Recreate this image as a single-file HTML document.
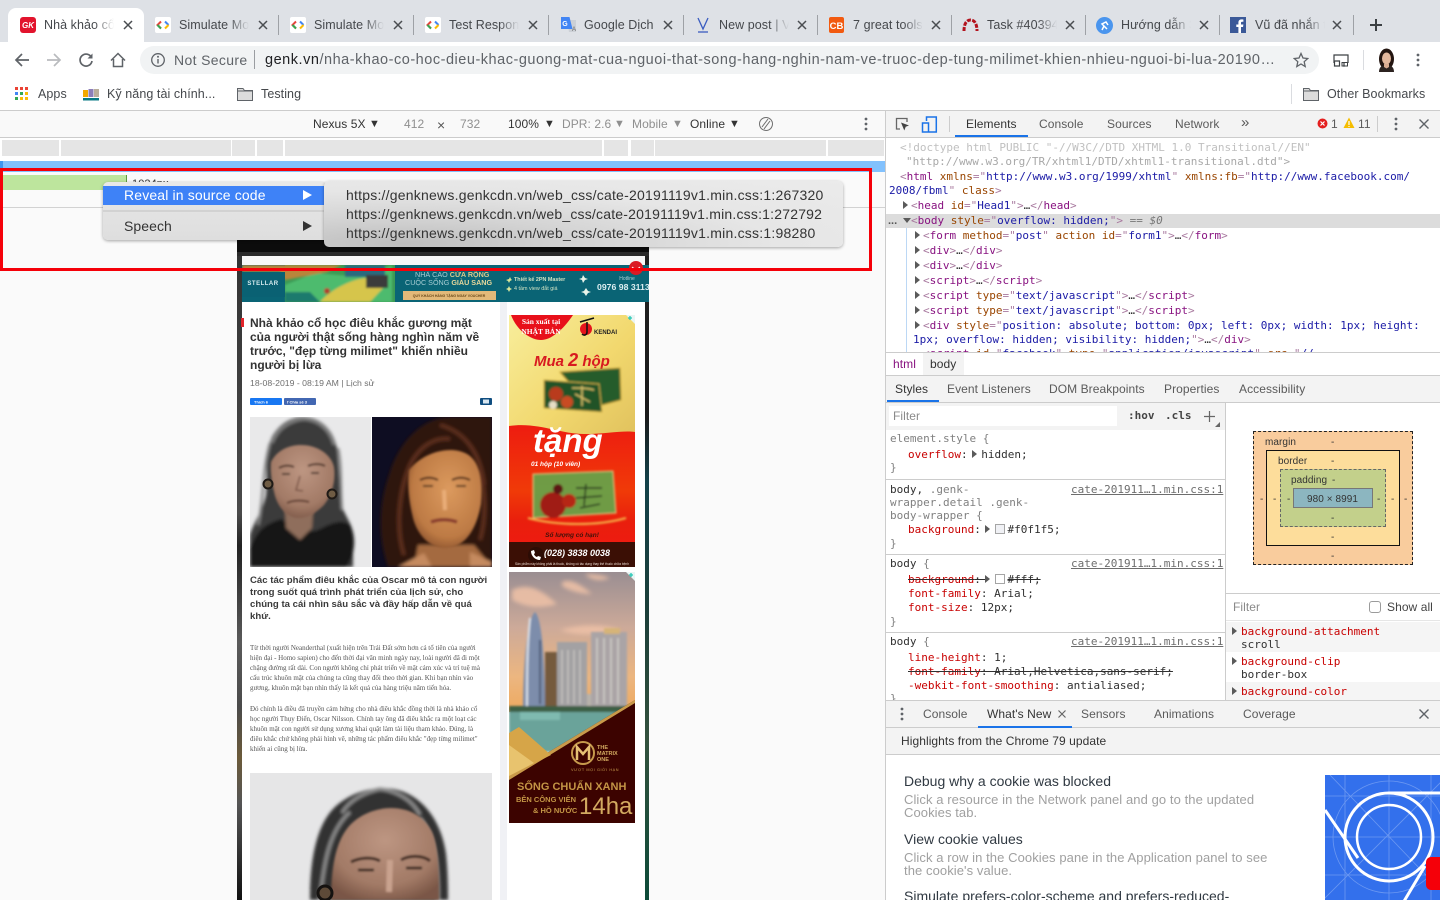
<!DOCTYPE html>
<html><head><meta charset="utf-8"><title>DevTools</title>
<style>
html,body{margin:0;padding:0;width:1440px;height:900px;overflow:hidden;background:#fafafa;font:12px "Liberation Sans","Noto Sans CJK SC",sans-serif;color:#333}
.a{position:absolute;display:block}
.t{position:absolute;white-space:nowrap;line-height:16px;letter-spacing:.07px}
.f{mask-image:linear-gradient(to right,#000 72%,transparent 100%);-webkit-mask-image:linear-gradient(to right,#000 72%,transparent 100%);width:70px;overflow:hidden;top:17px;font-size:12.5px;color:#45484c}
.m{position:absolute;white-space:pre;margin-top:1px;font:11px/14px "DejaVu Sans Mono","Liberation Mono",monospace;color:#303030}
.p{color:#881280}.n{color:#994500}.v{color:#1a1aa6}.g{color:#a8799f}.d{color:#c0c0c0}
.r{color:#c80000}.s{text-decoration:line-through}.l{color:#6d6d6d;text-decoration:underline}
.y{color:#808080}
.tri{position:absolute;width:0;height:0;border-left:5px solid #5a5a5a;border-top:4px solid transparent;border-bottom:4px solid transparent}
.it{display:inline-block;width:0;height:0;border-left:5px solid #5a5a5a;border-top:4px solid transparent;border-bottom:4px solid transparent;margin-left:-2px;margin-right:5px}
.sw{display:inline-block;width:8px;height:8px;border:1px solid #a5a5a5;vertical-align:-1px;margin-right:2px}
.dev{color:#333;font-size:12px}.gr{color:#8f8f8f}
.seg{position:absolute;top:140px;height:16px;background:#e5e5e5}
.ln{position:absolute;background:#ccc}
.art{position:absolute;white-space:nowrap;color:#3a3a3a}
.art2{position:absolute;white-space:nowrap;font:7px/10px "Liberation Serif",serif;color:#555;filter:blur(.3px)}
.cap{position:absolute;white-space:nowrap;font:bold 9.6px/12px "Liberation Sans",sans-serif;color:#3a3a3a}
.ttl{position:absolute;white-space:nowrap;font:bold 12px/14px "Liberation Sans",sans-serif;color:#333}
.gt{position:absolute;white-space:nowrap;font-size:13px;line-height:13px;color:#a0a0a0;letter-spacing:.08px}
.hd{position:absolute;white-space:nowrap;font-size:14px;line-height:16px;color:#303942}
</style></head>
<body>
<svg width="0" height="0" style="position:absolute">
<symbol id="x" viewBox="0 0 10 10"><path d="M1 1L9 9M9 1L1 9" stroke="#4a4d51" stroke-width="1.5" fill="none"/></symbol>
<symbol id="sim" viewBox="0 0 16 16"><rect width="16" height="16" rx="2" fill="#fff"/><path d="M6 4.5L2.500 8 6 11.5" fill="none" stroke="#e8453c" stroke-width="2"/><path d="M2.500 8L6 11.5" fill="none" stroke="#34a853" stroke-width="2"/><path d="M10 4.5L13.5 8" fill="none" stroke="#4285f4" stroke-width="2"/><path d="M13.5 8L10 11.5" fill="none" stroke="#fbbc05" stroke-width="2"/></symbol>
<symbol id="fold" viewBox="0 0 16 14"><path d="M.5 1.500h5.500l1.500 2h8v10H.5z" fill="#dcdcdc" stroke="#5f6368"/><path d="M.5 4h15" stroke="#5f6368"/></symbol>
<symbol id="keb" viewBox="0 0 4 14"><circle cx="2" cy="2" r="1.4" fill="#5f6368"/><circle cx="2" cy="7" r="1.4" fill="#5f6368"/><circle cx="2" cy="12" r="1.4" fill="#5f6368"/></symbol>
<filter id="b1"><feGaussianBlur stdDeviation="1"/></filter>
<filter id="b15"><feGaussianBlur stdDeviation="1.6"/></filter>
<filter id="b2"><feGaussianBlur stdDeviation="2.2"/></filter>
</svg>

<!-- Tab strip -->
<div class="a" style="left:0;top:0;width:1440px;height:42px;background:#dee1e6"></div>
<div class="a" style="left:8px;top:8px;width:136px;height:34px;background:#fff;border-radius:8px 8px 0 0"></div>
<div class="a" style="left:0;top:42px;width:1440px;height:68px;background:#fff"></div>
<div class="ln" style="left:278px;top:15px;width:1px;height:20px;background:#9ea1a6"></div>
<div class="ln" style="left:413px;top:15px;width:1px;height:20px;background:#9ea1a6"></div>
<div class="ln" style="left:548px;top:15px;width:1px;height:20px;background:#9ea1a6"></div>
<div class="ln" style="left:683px;top:15px;width:1px;height:20px;background:#9ea1a6"></div>
<div class="ln" style="left:817px;top:15px;width:1px;height:20px;background:#9ea1a6"></div>
<div class="ln" style="left:951px;top:15px;width:1px;height:20px;background:#9ea1a6"></div>
<div class="ln" style="left:1085px;top:15px;width:1px;height:20px;background:#9ea1a6"></div>
<div class="ln" style="left:1219px;top:15px;width:1px;height:20px;background:#9ea1a6"></div>
<div class="ln" style="left:1353px;top:15px;width:1px;height:20px;background:#9ea1a6"></div>

<!-- favicons -->
<svg class="a" style="left:20px;top:17px" width="16" height="16" viewBox="0 0 16 16"><rect width="16" height="16" rx="3" fill="#e2142d"/><text x="8" y="11" font-family="Liberation Sans" font-weight="bold" font-style="italic" font-size="8" fill="#fff" text-anchor="middle">GK</text></svg>
<svg class="a" style="left:155px;top:17px" width="16" height="16"><use href="#sim"/></svg>
<svg class="a" style="left:290px;top:17px" width="16" height="16"><use href="#sim"/></svg>
<svg class="a" style="left:425px;top:17px" width="16" height="16"><use href="#sim"/></svg>
<svg class="a" style="left:560px;top:16px" width="17" height="18" viewBox="0 0 17 18"><path d="M7 4h9v12H9z" fill="#ccd0d6"/><path d="M1 1h8.500l3 12H1z" fill="#4285f4"/><text x="5" y="10" font-family="Liberation Sans" font-weight="bold" font-size="7" fill="#fff" text-anchor="middle">G</text><text x="12" y="15" font-size="6" fill="#666" font-family="Liberation Sans">A</text></svg>
<svg class="a" style="left:696px;top:17px" width="14" height="16" viewBox="0 0 14 16"><path d="M2 1L7 12 12 1" fill="none" stroke="#3a5cc0" stroke-width="1.3"/><path d="M2 15h10" stroke="#3a5cc0" stroke-width="1.300"/></svg>
<svg class="a" style="left:829px;top:17px" width="15" height="16" viewBox="0 0 15 16"><rect width="15" height="16" rx="2" fill="#f25a10"/><text x="7.500" y="12" font-family="Liberation Sans" font-weight="bold" font-size="9.500" fill="#fff" text-anchor="middle">CB</text></svg>
<svg class="a" style="left:962px;top:17px" width="17" height="16" viewBox="0 0 17 16"><path d="M2 14C2 6 5 3 8.500 3S15 6 15 14" fill="none" stroke="#b3121d" stroke-width="3" stroke-dasharray="4 1.300"/></svg>
<svg class="a" style="left:1096px;top:17px" width="17" height="17" viewBox="0 0 17 17"><circle cx="8.500" cy="8.500" r="8.500" fill="#4a95ee"/><path d="M6 13l2-4-2-2 4-2 2 3M8 9l3 3" fill="none" stroke="#fff" stroke-width="1.500"/></svg>
<svg class="a" style="left:1230px;top:17px" width="16" height="16" viewBox="0 0 16 16"><rect width="16" height="16" fill="#3b5998"/><path d="M11 16V10h2l.4-2.500H11V6c0-.8.3-1.200 1.200-1.200h1.200V2.500C13 2.500 12.200 2.400 11.500 2.400 9.600 2.400 8.400 3.500 8.400 5.600v1.900H6.300V10h2.100v6z" fill="#fff"/></svg>

<span class="t f" style="left:44px">Nhà khảo cổ học</span>
<span class="t f" style="left:179px">Simulate Mobile</span>
<span class="t f" style="left:314px">Simulate Mobile</span>
<span class="t f" style="left:449px">Test Responsive</span>
<span class="t" style="left:584px;top:17px;font-size:12.5px;color:#45484c">Google Dịch</span>
<span class="t f" style="left:719px">New post | Vercel</span>
<span class="t f" style="left:853px">7 great tools to</span>
<span class="t f" style="left:987px">Task #40394 the</span>
<span class="t f" style="left:1121px">Hướng dẫn 3 cách</span>
<span class="t f" style="left:1255px">Vũ đã nhắn tin cho</span>

<svg class="a" style="left:123px;top:20px" width="10" height="10"><use href="#x"/></svg>
<svg class="a" style="left:258px;top:20px" width="10" height="10"><use href="#x"/></svg>
<svg class="a" style="left:393px;top:20px" width="10" height="10"><use href="#x"/></svg>
<svg class="a" style="left:528px;top:20px" width="10" height="10"><use href="#x"/></svg>
<svg class="a" style="left:663px;top:20px" width="10" height="10"><use href="#x"/></svg>
<svg class="a" style="left:797px;top:20px" width="10" height="10"><use href="#x"/></svg>
<svg class="a" style="left:931px;top:20px" width="10" height="10"><use href="#x"/></svg>
<svg class="a" style="left:1065px;top:20px" width="10" height="10"><use href="#x"/></svg>
<svg class="a" style="left:1199px;top:20px" width="10" height="10"><use href="#x"/></svg>
<svg class="a" style="left:1332px;top:20px" width="10" height="10"><use href="#x"/></svg>
<svg class="a" style="left:1369px;top:18px" width="14" height="14"><path d="M7 1v12M1 7h12" stroke="#3c4043" stroke-width="2"/></svg>

<!-- Toolbar -->
<svg class="a" style="left:14px;top:52px" width="16" height="16" viewBox="0 0 16 16"><path d="M15 8H2M8 2L2 8l6 6" fill="none" stroke="#5f6368" stroke-width="1.700"/></svg>
<svg class="a" style="left:46px;top:52px" width="16" height="16" viewBox="0 0 16 16"><path d="M1 8h13M8 2l6 6-6 6" fill="none" stroke="#b9bbbe" stroke-width="1.700"/></svg>
<svg class="a" style="left:78px;top:52px" width="16" height="16" viewBox="0 0 16 16"><path d="M13.500 5.500A6 6 0 1 0 14 9" fill="none" stroke="#5f6368" stroke-width="1.700"/><path d="M14.500 1.500v5h-5z" fill="#5f6368"/></svg>
<svg class="a" style="left:110px;top:52px" width="16" height="16" viewBox="0 0 16 16"><path d="M1 8.500L8 1.500l7 7M3.500 7v7.500h9V7" fill="none" stroke="#5f6368" stroke-width="1.500"/></svg>
<div class="a" style="left:140px;top:46px;width:1179px;height:28px;background:#f1f3f4;border-radius:14px"></div>
<svg class="a" style="left:150px;top:52px" width="16" height="16" viewBox="0 0 16 16"><circle cx="8" cy="8" r="6.300" fill="none" stroke="#5f6368" stroke-width="1.300"/><path d="M8 7v4.500" stroke="#5f6368" stroke-width="1.400"/><circle cx="8" cy="4.800" r="1" fill="#5f6368"/></svg>
<span class="t" style="left:174px;top:52px;font-size:14px;color:#5f6368;letter-spacing:.35px">Not Secure</span>
<div class="ln" style="left:254px;top:50px;width:1px;height:19px;background:#9a9da1"></div>
<span class="t" style="left:265px;top:52px;font-size:14.5px;letter-spacing:.52px;color:#5f6368;width:1010px;overflow:hidden"><span style="color:#202124">genk.vn</span>/nha-khao-co-hoc-dieu-khac-guong-mat-cua-nguoi-that-song-hang-nghin-nam-ve-truoc-dep-tung-milimet-khien-nhieu-nguoi-bi-lua-20190…</span>
<svg class="a" style="left:1293px;top:52px" width="16" height="16" viewBox="0 0 16 16"><path d="M8 1.500l2 4.500 4.800.5-3.600 3.200 1 4.800L8 12l-4.200 2.500 1-4.800L1.200 6.500 6 6z" fill="none" stroke="#5f6368" stroke-width="1.300"/></svg>
<svg class="a" style="left:1333px;top:53px" width="16" height="14" viewBox="0 0 16 14"><path d="M1 10V2h14v8M1.500 11v2h5v-5h-5zM10 13h2M11 10v3" fill="none" stroke="#3c4043" stroke-width="1.200"/><path d="M9 9.500h5.500V13H9z" fill="none" stroke="#3c4043"/></svg>
<div class="ln" style="left:1363px;top:50px;width:1px;height:20px;background:#dadce0"></div>
<svg class="a" style="left:1376px;top:48px" width="21" height="24" viewBox="0 0 21 24"><ellipse cx="10.500" cy="11" rx="7.500" ry="10.500" fill="#231510"/><ellipse cx="10.500" cy="10.500" rx="4.500" ry="6" fill="#e2b79c"/><path d="M3 24c0-5 3-7 7.500-7s7.500 2 7.500 7z" fill="#2c2320"/><path d="M8 16h5v3l-2.500 1.500L8 19z" fill="#d9ab90"/></svg>
<svg class="a" style="left:1416px;top:53px" width="4" height="14"><use href="#keb"/></svg>

<!-- Bookmarks -->
<svg class="a" style="left:15px;top:87px" width="14" height="14" viewBox="0 0 14 14">
<rect x="0" y="0" width="3" height="3" fill="#ea4335"/><rect x="5" y="0" width="3" height="3" fill="#ea4335"/><rect x="10" y="0" width="3" height="3" fill="#ea4335"/>
<rect x="0" y="5" width="3" height="3" fill="#4285f4"/><rect x="5" y="5" width="3" height="3" fill="#34a853"/><rect x="10" y="5" width="3" height="3" fill="#fbbc05"/>
<rect x="0" y="10" width="3" height="3" fill="#34a853"/><rect x="5" y="10" width="3" height="3" fill="#fbbc05"/><rect x="10" y="10" width="3" height="3" fill="#fbbc05"/></svg>
<span class="t" style="left:38px;top:86px;color:#45484c;font-size:12.500px">Apps</span>
<svg class="a" style="left:83px;top:88px" width="16" height="13" viewBox="0 0 16 13"><rect x="0" y="2" width="5" height="7" fill="#f2a900"/><rect x="5.500" y="1" width="5" height="8" fill="#8d7fb8"/><rect x="11" y="1" width="5" height="8" fill="#b9ae9a"/><rect x="0" y="10" width="16" height="2.500" fill="#087a84"/></svg>
<span class="t" style="left:107px;top:86px;color:#45484c;font-size:12.500px">Kỹ năng tài chính...</span>
<svg class="a" style="left:237px;top:87px" width="16" height="14"><use href="#fold"/></svg>
<span class="t" style="left:261px;top:86px;color:#45484c;font-size:12.500px">Testing</span>
<div class="ln" style="left:1291px;top:84px;width:1px;height:20px;background:#dadce0"></div>
<svg class="a" style="left:1303px;top:87px" width="16" height="14"><use href="#fold"/></svg>
<span class="t" style="left:1327px;top:86px;color:#45484c;font-size:12.500px">Other Bookmarks</span>
<div class="ln" style="left:0;top:110px;width:1440px;height:1px"></div>

<!-- Device toolbar -->
<div class="a" style="left:0;top:111px;width:885px;height:26px;background:#f9f9f9"></div>
<div class="ln" style="left:0;top:137px;width:885px;height:1px"></div>
<div class="a" style="left:0;top:138px;width:885px;height:23px;background:#fff"></div>
<span class="t dev" style="left:313px;top:116px">Nexus 5X</span><span class="t dev" style="left:369px;top:116px;font-size:11px">▼</span>
<span class="t gr" style="left:404px;top:116px">412</span><span class="t" style="left:437px;top:117px;font-size:14px;color:#555">×</span><span class="t gr" style="left:460px;top:116px">732</span>
<span class="t dev" style="left:508px;top:116px">100%</span><span class="t dev" style="left:544px;top:116px;font-size:11px">▼</span>
<span class="t gr" style="left:562px;top:116px">DPR: 2.6</span><span class="t gr" style="left:614px;top:116px;font-size:11px">▼</span>
<span class="t gr" style="left:632px;top:116px">Mobile</span><span class="t gr" style="left:672px;top:116px;font-size:11px">▼</span>
<span class="t dev" style="left:690px;top:116px">Online</span><span class="t dev" style="left:729px;top:116px;font-size:11px">▼</span>
<svg class="a" style="left:758px;top:116px" width="16" height="16" viewBox="0 0 16 16"><circle cx="8" cy="8" r="6.500" fill="none" stroke="#6e6e6e"/><path d="M4 11L10 3M6 13l6-8" stroke="#6e6e6e" fill="none"/></svg>
<svg class="a" style="left:864px;top:117px" width="4" height="14"><use href="#keb"/></svg>

<div class="seg" style="left:2px;width:57px"></div><div class="seg" style="left:61px;width:170px"></div><div class="seg" style="left:232px;width:23px"></div><div class="seg" style="left:257px;width:26px"></div><div class="seg" style="left:285px;width:317px"></div><div class="seg" style="left:604px;width:24px"></div><div class="seg" style="left:631px;width:23px"></div><div class="seg" style="left:655px;width:171px"></div><div class="seg" style="left:828px;width:56px"></div>
<div class="a" style="left:0;top:161px;width:885px;height:11px;background:#82c1fd"></div>
<div class="a" style="left:0;top:161px;width:3px;height:11px;background:#3f97f0"></div>
<div class="a" style="left:3px;top:175px;width:123px;height:15px;background:#bde59d;border-right:1px solid #5f9a3f"></div>
<span class="t" style="left:132px;top:176px;font-size:11px;color:#333">1024px</span>
<div class="ln" style="left:0;top:207px;width:885px;height:1px;background:#d2d2d2"></div>

<!-- Simulated page -->
<div class="a" style="left:237px;top:240px;width:412px;height:660px;background:#f0f1f5;overflow:hidden">
 <div class="a" style="left:0;top:0;width:412px;height:12px;background:#0c0c0c"></div>
 <div class="a" style="left:0;top:12px;width:412px;height:4px;background:#2a2a2a"></div>
 <div class="a" style="left:5px;top:16px;width:404px;height:10px;background:#f7f7f7"></div>
 <div class="a" style="left:5px;top:62px;width:258px;height:598px;background:#fff"></div>
 <div class="a" style="left:270px;top:62px;width:138px;height:598px;background:#fff"></div>
 <div class="a" style="left:0;top:16px;width:5px;height:644px;background:linear-gradient(#333 0,#4a4a4a 40%,#222 45%,#5a5a5a 60%,#4a4a4a 70%,#6b5a3a 78%,#555 85%,#111 100%)"></div>
 <div class="a" style="left:408px;top:16px;width:4px;height:644px;background:linear-gradient(#222 0,#1b1b1b 25%,#14424a 35%,#1c3f3a 55%,#34523e 75%,#0c4a38 100%)"></div>
</div>

<!-- Banner & images SVG -->
<svg class="a" style="left:0;top:0" width="885" height="900" viewBox="0 0 885 900">
<defs>
<clipPath id="ban"><rect x="242" y="265" width="407" height="37"/></clipPath>
<clipPath id="f1"><rect x="250" y="417" width="121" height="150"/></clipPath>
<clipPath id="f2"><rect x="372" y="417" width="120" height="150"/></clipPath>
<clipPath id="f3"><rect x="250" y="773" width="242" height="127"/></clipPath>
<clipPath id="ad1"><rect x="509" y="315" width="126" height="252"/></clipPath>
<clipPath id="ad2"><rect x="509" y="572" width="126" height="252"/></clipPath>
<linearGradient id="gold" x1="0" y1="0" x2="1" y2="1"><stop offset="0" stop-color="#f8ee9c"/><stop offset=".55" stop-color="#f2d86e"/><stop offset="1" stop-color="#dfc05c"/></linearGradient>
<linearGradient id="red" x1="0" y1="0" x2="0" y2="1"><stop offset="0" stop-color="#ee1c10"/><stop offset=".55" stop-color="#f03a08"/><stop offset=".8" stop-color="#e91f0d"/><stop offset="1" stop-color="#ee1b10"/></linearGradient>
<linearGradient id="sky" x1="0" y1="0" x2="0" y2="1"><stop offset="0" stop-color="#9a8e92"/><stop offset=".4" stop-color="#cdaa99"/><stop offset=".75" stop-color="#ecb680"/><stop offset="1" stop-color="#eea95f"/></linearGradient>
<radialGradient id="sk1" cx=".5" cy=".35" r=".7"><stop offset="0" stop-color="#bd9682"/><stop offset=".7" stop-color="#a27a66"/><stop offset="1" stop-color="#7a5646"/></radialGradient>
<radialGradient id="sk2" cx=".55" cy=".4" r=".7"><stop offset="0" stop-color="#dc9a5e"/><stop offset=".7" stop-color="#bd7a44"/><stop offset="1" stop-color="#7a4526"/></radialGradient>
</defs>
<!-- Banner -->
<g clip-path="url(#ban)">
 <rect x="242" y="265" width="407" height="37" fill="#0a6475"/>
 <rect x="285" y="265" width="110" height="37" fill="#3d9a55"/>
 <g filter="url(#b1)">
 <path d="M285 302V285l30-12 45 4 32-12v37z" fill="#4dbb6e"/>
 <path d="M320 302c10-12 30-22 45-24l20 8-15 16z" fill="#d6c54b"/>
 <path d="M242 265h100l-15 7-42 8-5-8h-38z" fill="#b9853a"/>
 <rect x="345" y="265" width="40" height="12" fill="#2c6a7e"/>
 <rect x="366" y="275" width="22" height="13" fill="#3a3a3a"/>
 <path d="M285 292h25l10 10h-35z" fill="#1b7a6d"/>
 <circle cx="327" cy="291" r="3" fill="#b03c2f"/>
 </g>
 <rect x="242" y="272" width="43" height="25" fill="#0a6173"/>
 <text x="263" y="285" font-family="Liberation Sans" font-weight="bold" font-size="6" fill="#d8ecef" text-anchor="middle" letter-spacing=".5">STELLAR</text>
 <text x="415" y="277" font-family="Liberation Sans" font-size="7.200" fill="#a7cdd3">NHÀ CAO <tspan font-weight="bold" fill="#d9c98a">CỬA RỘNG</tspan></text>
 <text x="405" y="285" font-family="Liberation Sans" font-size="7.200" fill="#a7cdd3">CUỘC SỐNG <tspan font-weight="bold" fill="#e7d89c">GIÀU SANG</tspan></text>
 <rect x="403" y="291" width="93" height="9" fill="#e2b979"/>
 <text x="449" y="297" font-family="Liberation Sans" font-size="3.500" font-weight="bold" fill="#6c4a19" text-anchor="middle">QUÝ KHÁCH HÀNG TẶNG NGAY VOUCHER</text>
 <text x="514" y="281" font-family="Liberation Sans" font-size="5.400" font-weight="bold" fill="#cfe2c2">Thiết kế 2PN Master</text>
 <text x="514" y="290" font-family="Liberation Sans" font-size="5.400" fill="#cfe2c2">4 tầm view đắt giá</text>
 <path d="M506 280l3-1 1-2 1 2 1 1-2 1-1 2-1-2zM506 289l2-1 1-2 1 2 2 1-2 1-1 2-1-2z" fill="#d9e69a"/>
 <text x="627" y="280" font-family="Liberation Sans" font-size="5" fill="#a9ced4" text-anchor="middle">Hotline</text>
 <text x="597" y="290" font-family="Liberation Sans" font-size="8.700" font-weight="bold" fill="#dceef1">0976 98 3113</text>
 <path d="M583 275l2 3 3 1-3 1-2 3-1-3-3-1 3-1zM586 288l2 3 3 1-3 1-2 3-2-3-3-1 3-1z" fill="#e9f4e9"/>
</g>
<circle cx="636" cy="268" r="7" fill="#da1a24"/>
<path d="M632 267l4 3 4-3" fill="none" stroke="#fff"/>

<!-- Face 1 -->
<g clip-path="url(#f1)">
 <rect x="250" y="417" width="121" height="150" fill="#e9e9ea"/>
 <g filter="url(#b15)">
 <path d="M250 535c4-14 12-22 16-40 2-22-2-40 6-58 8-14 20-20 32-20 18 1 30 14 33 32 3 22 2 44 6 60 4 10 10 16 10 28v30H250z" fill="#3a3a3a"/>
 <path d="M258 525c6-24 4-54 12-82M342 510c-2-24 0-44-4-62M304 419c-12 1-26 8-32 24M304 419c14 1 26 10 30 26" stroke="#858585" stroke-width="2.500" fill="none"/>
 <path d="M250 567v-18c6-18 16-26 32-30 10 10 24 16 38 10 12-6 22-10 30-4 6 10 6 30 -4 42z" fill="#151515"/>
 <path d="M285 510h28l-1 18-12 12-14-12z" fill="#8f6e5c"/>
 </g>
 <g filter="url(#b1)">
 <path d="M271 462c6-12 18-17 30-17 16 0 30 9 33 22 2 14-2 28-10 38-8 8-16 13-25 13-11 0-20-9-24-22-3-12-5-24-4-34z" fill="url(#sk1)"/>
 <path d="M279 468c5-3 11-3 15-1M308 466c4-2 12-3 17 0" stroke="#4f342a" stroke-width="2" fill="none"/>
 <path d="M282 474l8 0M311 473l8 0" stroke="#2e1f19" stroke-width="1.500"/>
 <path d="M300 476l-4 14 7 1" stroke="#7a5546" stroke-width="1.500" fill="none"/>
 <path d="M287 503c6-3 16-3 22-1" stroke="#5f3e32" stroke-width="2" fill="none"/>
 </g>
 <circle cx="268" cy="484" r="4.500" fill="#6f5c44" stroke="#1f1a16" stroke-width="2"/>
 <circle cx="332" cy="494" r="4.500" fill="#6f5c44" stroke="#1f1a16" stroke-width="2"/>
</g>
<!-- Face 2 -->
<g clip-path="url(#f2)">
 <rect x="372" y="417" width="120" height="150" fill="#0e0d22"/>
 <g filter="url(#b15)">
 <path d="M388 567c-10-30-10-62 2-95 10-32 34-55 60-55h42v150z" fill="#2f1610"/>
 <path d="M404 555c-8-25-6-62 6-90 10-20 26-28 40-26M440 425c22 6 40 24 44 60M480 470c6 24 6 50 0 70" stroke="#5c2f1c" stroke-width="4" fill="none"/>
 <path d="M418 545h56l18 22h-78z" fill="#a46a40"/>
 <path d="M398 567l26-14 8 14zM470 552l22 10v5h-22z" fill="#c58a5e"/>
 </g>
 <g filter="url(#b1)">
 <path d="M409 470c12-16 40-26 58-16 14 8 16 30 14 50-4 22-14 44-36 44-16 0-28-14-32-30-4-16-6-34-4-48z" fill="url(#sk2)"/>
 <path d="M420 480c6-3 12-3 18 0M452 480c6-3 12-3 18 0" stroke="#4a2814" stroke-width="2" fill="none"/>
 <path d="M423 486l10 0M456 486l10 0" stroke="#2e1a0e" stroke-width="1.500"/>
 <path d="M444 490l1 20" stroke="#e9ad78" stroke-width="4" fill="none"/>
 <path d="M431 522c8-3 18-3 26 0" stroke="#8a3d2e" stroke-width="3.500" fill="none"/>
 </g>
</g>
<!-- Face 3 -->
<g clip-path="url(#f3)">
 <rect x="250" y="773" width="242" height="127" fill="#e6e6e7"/>
 <g filter="url(#b15)">
 <path d="M310 900c0-60 14-88 34-100 18-12 42-15 60-8 24 10 38 34 42 62 2 18 2 36 2 46z" fill="#333"/>
 <path d="M320 900c4-40 10-70 30-88M438 900c0-30-2-58-18-82M380 789c-14 3-30 10-38 24M380 789c16 2 32 10 40 26" stroke="#8a8a8a" stroke-width="3.500" fill="none"/>
 </g>
 <g filter="url(#b1)">
 <path d="M331 900c0-30 4-60 20-76 10-10 26-16 40-16 18 0 32 8 40 22 8 14 8 46 8 70z" fill="url(#sk1)"/>
 <path d="M351 862c10-5 22-5 29-1M401 860c8-5 22-5 29 1" stroke="#3f2920" stroke-width="3" fill="none"/>
 <path d="M358 870l16 0M406 868l16 0" stroke="#2a1b15" stroke-width="2.500"/>
 <path d="M390 860l-1 32" stroke="#c9a28e" stroke-width="6" fill="none"/>
 </g>
 <circle cx="325" cy="893" r="7" fill="#5d4a38" stroke="#151210" stroke-width="3"/>
</g>

<!-- Ad 1 -->
<g clip-path="url(#ad1)">
 <rect x="509" y="315" width="126" height="130" fill="url(#gold)"/>
 <path d="M509 426c30-4 50 8 75 8 22 0 40-4 51-2v113H509z" fill="url(#red)"/>
 <rect x="509" y="542" width="126" height="25" fill="#3b0f05"/>
 <path d="M511 315c6 16 20 25 30 25s22-10 32-25z" fill="#e8101a"/>
 <text x="541" y="324" font-family="Liberation Serif" font-weight="bold" font-size="7.500" fill="#fff" text-anchor="middle">Sản xuất tại</text>
 <text x="541" y="334" font-family="Liberation Serif" font-weight="bold" font-size="7.500" fill="#fff" text-anchor="middle">NHẬT BẢN</text>
 <circle cx="586" cy="329" r="6" fill="#e4151c"/>
 <path d="M580 322l14-4M587 322v10c0 3-3 4-5 2" stroke="#111" stroke-width="1.500" fill="none"/>
 <text x="594" y="334" font-family="Liberation Sans" font-weight="bold" font-size="6" fill="#222">KENDAI</text>
 <text x="534" y="366" font-family="Liberation Sans" font-style="italic" font-weight="bold" font-size="15" fill="#d81a20">Mua <tspan font-size="18">2</tspan> hộp</text>
 <g filter="url(#b1)" opacity=".98">
 <path d="M560 372l60-4 1 32-30 8z" fill="#245a2c" stroke="#c9a43a"/>
 <path d="M544 380l55 4 3 28-58-4z" fill="#1f5128" stroke="#d2b14a"/>
 <circle cx="556" cy="394" r="7" fill="#b8371c"/><circle cx="567" cy="402" r="6" fill="#c84a23"/><circle cx="553" cy="405" r="4" fill="#e6dfc8"/>
 <path d="M572 388c8 0 16 0 22 2M575 394l15 8M582 386v20" stroke="#d8c06a" stroke-width="1.500" fill="none"/>
 </g>
 <text x="533" y="452" font-family="Liberation Sans" font-style="italic" font-weight="bold" font-size="33" fill="#fff">tặng</text>
 <text x="531" y="466" font-family="Liberation Sans" font-style="italic" font-weight="bold" font-size="6.500" fill="#fff">01 hộp (10 viên)</text>
 <g filter="url(#b1)" opacity=".98">
 <path d="M533 474l80-3 3 42-83 5z" fill="#6d9e46" stroke="#e7c87f"/>
 <circle cx="553" cy="505" r="13" fill="#9f1a15"/><circle cx="569" cy="501" r="7" fill="#b52519"/><circle cx="558" cy="489" r="5" fill="#5a1612"/>
 <path d="M576 488l26 0M586 484l-2 22M576 498l26-2M580 508l20-4" stroke="#1f321b" stroke-width="1.500" fill="none"/>
 <path d="M528 518c30 8 70 8 98 0" stroke="#f6b84c" stroke-width="2" fill="none"/>
 </g>
 <text x="572" y="537" font-family="Liberation Sans" font-style="italic" font-weight="bold" font-size="6.500" fill="#40120a" text-anchor="middle">Số lượng có hạn!</text>
 <circle cx="536" cy="555" r="8" fill="#2c0c05"/>
 <path d="M531 551c0 5 4 9 9 9l1-3-3-1-1 1c-1 0-3-2-3-3l1-1-1-3z" fill="#fff"/>
 <text x="544" y="556" font-family="Liberation Sans" font-style="italic" font-weight="bold" font-size="9" fill="#fff">(028) 3838 0038</text>
 <text x="572" y="565" font-family="Liberation Sans" font-size="3.200" fill="#e8d9d0" text-anchor="middle">Sản phẩm này không phải là thuốc, không có tác dụng thay thế thuốc chữa bệnh</text>
</g>
<path d="M626 315h9v9z" fill="#eaf5f4"/><path d="M630 316v4M628 318h4" stroke="#25c7b5" stroke-width="1.300"/>

<!-- Ad 2 -->
<g clip-path="url(#ad2)">
 <rect x="509" y="572" width="126" height="140" fill="url(#sky)"/>
 <g filter="url(#b2)" opacity=".9"><path d="M512 590c16-8 30 0 45 14-20 6-34 2-45-4zM562 582c10-4 20 4 30 12-14 0-24-4-30-8zM585 574c12 0 20 2 25 4-10 4-20 2-25-4zM560 630c22-6 44-6 60 0-20 6-44 6-60 0z" fill="#ecc0a6"/></g>
 <g filter="url(#b1)">
 <path d="M523 708c0-40 4-90 12-96 7 6 10 50 10 96z" fill="#7d8dab"/>
 <path d="M530 618c-3 30-3 60-3 90" stroke="#dce1e9" stroke-width="2" fill="none"/>
 <path d="M540 640v64" stroke="#4f5c78" stroke-width="2"/>
 <rect x="545" y="652" width="12" height="56" fill="#755a3d"/>
 <rect x="557" y="642" width="30" height="64" fill="#a3a1a3"/>
 <path d="M562 650v54M568 650v54M574 650v54M580 650v54" stroke="#c9c6c2" stroke-width="1.300"/>
 <rect x="587" y="694" width="5" height="12" fill="#b8b2aa"/>
 <rect x="591" y="632" width="36" height="74" fill="#aaa4a6"/>
 <path d="M597 638v66M604 638v66M611 638v66M618 638v66" stroke="#d6d2cc" stroke-width="1.300"/>
 <rect x="604" y="628" width="16" height="6" fill="#d6b478"/>
 <rect x="509" y="706" width="126" height="7" fill="#3e5f45"/>
 <rect x="509" y="712" width="126" height="40" fill="#6aa39a"/>
 <path d="M520 712h40v8h-40z" fill="#7fbab0"/>
 </g>
 <path d="M509 776l126-76v123H509z" fill="#3c0300"/>
 <path d="M509 776l126-76v3L509 780z" fill="#c99a4a"/>
 <path d="M509 733l10-6 32 28-42 21z" fill="#d6a548"/>
 <path d="M509 745l25 18-25 13z" fill="#e8c36e"/>
 <circle cx="583" cy="753" r="11" fill="none" stroke="#c69a4c" stroke-width="2"/>
 <path d="M577 760v-13l6 7 6-7v13" fill="none" stroke="#e5c074" stroke-width="2.500"/>
 <text x="597" y="749" font-family="Liberation Sans" font-weight="bold" font-size="5.500" fill="#d3aa60">THE</text>
 <text x="597" y="755" font-family="Liberation Sans" font-weight="bold" font-size="5.500" fill="#d3aa60">MATRIX</text>
 <text x="597" y="761" font-family="Liberation Sans" font-weight="bold" font-size="5.500" fill="#d3aa60">ONE</text>
 <text x="571" y="771" font-family="Liberation Sans" font-size="3.800" fill="#c69a4c" letter-spacing=".6">VƯỢT MỌI GIỚI HẠN</text>
 <text x="517" y="790" font-family="Liberation Sans" font-size="11" font-weight="bold" fill="#c39545">SỐNG CHUẨN XANH</text>
 <text x="516" y="802" font-family="Liberation Sans" font-size="7.500" font-weight="bold" fill="#c39545">BÊN CÔNG VIÊN</text>
 <text x="533" y="813" font-family="Liberation Sans" font-size="7.500" font-weight="bold" fill="#c39545">&amp; HỒ NƯỚC</text>
 <text x="579" y="814" font-family="Liberation Sans" font-size="24" fill="#d3aa60">14ha</text>
</g>
<path d="M626 572h9v9z" fill="#eaf5f4"/><path d="M631 573v4M629 575h4" stroke="#25c7b5" stroke-width="1.300"/>

<!-- share buttons -->
<rect x="250" y="398" width="32" height="7" rx="1" fill="#1877f2"/>
<text x="254" y="403.500" font-family="Liberation Sans" font-weight="bold" font-size="4" fill="#fff">Thích 6</text>
<rect x="284" y="398" width="32" height="7" rx="1" fill="#4267b2"/>
<text x="287" y="403.500" font-family="Liberation Sans" font-weight="bold" font-size="4" fill="#fff">f Chia sẻ 3</text>
<rect x="480" y="398" width="12" height="7" rx="1" fill="#0f4d80"/>
<rect x="483" y="399.500" width="6" height="4" fill="#d8e6f0"/>
</svg>

<div class="a" style="left:241px;top:318px;width:3px;height:9px;background:#e2242a"></div>
<span class="ttl" style="left:250px;top:316px">Nhà khảo cổ học điêu khắc gương mặt</span>
<span class="ttl" style="left:250px;top:330px">của người thật sống hàng nghìn năm về</span>
<span class="ttl" style="left:250px;top:344px">trước, "đẹp từng milimet" khiến nhiều</span>
<span class="ttl" style="left:250px;top:358px">người bị lừa</span>
<span class="art" style="left:250px;top:378px;font-size:8.700px;line-height:10px;color:#707070">18-08-2019 - 08:19 AM | Lịch sử</span>

<span class="cap" style="left:250px;top:575px">Các tác phẩm điêu khắc của Oscar mô tả con người</span>
<span class="cap" style="left:250px;top:587px">trong suốt quá trình phát triển của lịch sử, cho</span>
<span class="cap" style="left:250px;top:599px">chúng ta cái nhìn sâu sắc và đầy hấp dẫn về quá</span>
<span class="cap" style="left:250px;top:611px">khứ.</span>

<span class="art2" style="left:250px;top:643px">Từ thời người Neanderthal (xuất hiện trên Trái Đất sớm hơn cả tổ tiên của người</span>
<span class="art2" style="left:250px;top:653px">hiện đại - Homo sapien) cho đến thời đại văn minh ngày nay, loài người đã đi một</span>
<span class="art2" style="left:250px;top:663px">chặng đường rất dài. Con người không chỉ phát triển về mặt cảm xúc và trí tuệ mà</span>
<span class="art2" style="left:250px;top:673px">cấu trúc khuôn mặt của chúng ta cũng thay đổi theo thời gian. Khi bạn nhìn vào</span>
<span class="art2" style="left:250px;top:683px">gương, khuôn mặt bạn nhìn thấy là kết quả của hàng triệu năm tiến hóa.</span>
<span class="art2" style="left:250px;top:704px">Đó chính là điều đã truyền cảm hứng cho nhà điêu khắc đồng thời là nhà khảo cổ</span>
<span class="art2" style="left:250px;top:714px">học người Thụy Điển, Oscar Nilsson. Chính tay ông đã điêu khắc ra một loạt các</span>
<span class="art2" style="left:250px;top:724px">khuôn mặt con người sử dụng xương khai quật làm tài liệu tham khảo. Đúng, là</span>
<span class="art2" style="left:250px;top:734px">điêu khắc chứ không phải hình vẽ, những tác phẩm điêu khắc "đẹp từng milimet"</span>
<span class="art2" style="left:250px;top:744px">khiến ai cũng bị lừa.</span>

<!-- Red annotation -->
<div class="a" style="left:0;top:168px;width:872px;height:103px;box-sizing:border-box;border:3px solid #f50009"></div>

<!-- Context menus -->
<div class="a" style="left:103px;top:182px;width:221px;height:58px;background:linear-gradient(#e8e8e8,#dedede);border-radius:5px 0 0 5px;box-shadow:0 1px 3px rgba(0,0,0,.35)"></div>
<div class="a" style="left:103px;top:186px;width:221px;height:19px;background:#3e82f7"></div>
<span class="t" style="left:124px;top:187px;font-size:14px;color:#fff;letter-spacing:.15px">Reveal in source code</span>
<div class="a" style="left:303px;top:190px;width:0;height:0;border-left:9px solid #fff;border-top:5px solid transparent;border-bottom:5px solid transparent"></div>
<div class="a" style="left:103px;top:210px;width:221px;height:2px;background:#d2d2d2"></div>
<span class="t" style="left:124px;top:218px;font-size:14px;color:#333">Speech</span>
<div class="a" style="left:303px;top:221px;width:0;height:0;border-left:9px solid #333;border-top:5px solid transparent;border-bottom:5px solid transparent"></div>
<div class="a" style="left:324px;top:181px;width:519px;height:66px;background:radial-gradient(ellipse at 15% 95%,#bebebe 0,#d4d4d4 30%,#e6e6e6 60%,#ebebeb 100%);border-radius:5px;box-shadow:0 1px 3px rgba(0,0,0,.35)"></div>
<span class="t" style="left:346px;top:187px;font-size:14px;color:#333;letter-spacing:.22px">https://genknews.genkcdn.vn/web_css/cate-20191119v1.min.css:1:267320</span>
<span class="t" style="left:346px;top:206px;font-size:14px;color:#333;letter-spacing:.2px">https://genknews.genkcdn.vn/web_css/cate-20191119v1.min.css:1:272792</span>
<span class="t" style="left:346px;top:225px;font-size:14px;color:#333;letter-spacing:.22px">https://genknews.genkcdn.vn/web_css/cate-20191119v1.min.css:1:98280</span>

<!-- DevTools -->
<div class="a" style="left:885px;top:111px;width:555px;height:789px;background:#fff"></div>
<div class="ln" style="left:885px;top:111px;width:1px;height:789px"></div>
<div class="a" style="left:886px;top:111px;width:554px;height:26px;background:#f3f3f3"></div>
<div class="ln" style="left:886px;top:137px;width:554px;height:1px"></div>
<svg class="a" style="left:895px;top:117px" width="15" height="15" viewBox="0 0 15 15"><path d="M12 5V1.500H1.500V12H5" fill="none" stroke="#666" stroke-width="1.300"/><path d="M6 5.500l8 3-3.300 1.300L9.300 13.500z" fill="#444"/></svg>
<svg class="a" style="left:921px;top:116px" width="17" height="17" viewBox="0 0 17 17"><path d="M5.500 5V1h9.800v15H8" fill="none" stroke="#1a73e8" stroke-width="1.500"/><rect x="1.500" y="7" width="6" height="9" fill="none" stroke="#1a73e8" stroke-width="1.500"/></svg>
<div class="ln" style="left:949px;top:116px;width:1px;height:16px"></div>
<span class="t" style="left:966px;top:116px;color:#333">Elements</span>
<div class="a" style="left:955px;top:135px;width:73px;height:2px;background:#1a73e8"></div>
<span class="t" style="left:1039px;top:116px;color:#5a5a5a">Console</span>
<span class="t" style="left:1107px;top:116px;color:#5a5a5a">Sources</span>
<span class="t" style="left:1175px;top:116px;color:#5a5a5a">Network</span>
<span class="t" style="left:1241px;top:115px;color:#5a5a5a;font-size:15px">»</span>
<svg class="a" style="left:1317px;top:118px" width="11" height="11" viewBox="0 0 11 11"><circle cx="5.500" cy="5.500" r="5" fill="#e41e1e"/><path d="M3.500 3.500l4 4m0-4l-4 4" stroke="#fff" stroke-width="1.200"/></svg>
<span class="t" style="left:1331px;top:116px;color:#5a5a5a">1</span>
<svg class="a" style="left:1343px;top:117px" width="12" height="12" viewBox="0 0 12 12"><path d="M6 .5L11.500 11H.5z" fill="#f5bd00"/><path d="M6 4v4M6 9v1" stroke="#fff" stroke-width="1.200"/></svg>
<span class="t" style="left:1358px;top:116px;color:#5a5a5a">11</span>
<div class="ln" style="left:1377px;top:116px;width:1px;height:16px"></div>
<svg class="a" style="left:1394px;top:117px" width="4" height="14"><use href="#keb"/></svg>
<svg class="a" style="left:1419px;top:119px" width="10" height="10" viewBox="0 0 10 10"><path d="M.5.500l9 9m0-9l-9 9" stroke="#5f6368" stroke-width="1.400"/></svg>

<!-- Elements -->
<div class="a" style="left:886px;top:138px;width:554px;height:214px;overflow:hidden;background:#fff">
 <div class="a" style="left:0;top:76px;width:554px;height:14px;background:#dcdcdc"></div>
 <div class="a" style="left:20px;top:90px;width:1px;height:130px;background:#bcd8f5"></div>
 <span class="m d" style="left:14px;top:2px">&lt;!doctype html PUBLIC "-//W3C//DTD XHTML 1.0 Transitional//EN"</span>
 <span class="m d" style="left:20px;top:16px;color:#a8a8a8">"http://www.w3.org/TR/xhtml1/DTD/xhtml1-transitional.dtd"&gt;</span>
 <span class="m" style="left:14px;top:31px"><span class="g">&lt;</span><span class="p">html</span> <span class="n">xmlns</span><span class="g">="</span><span class="v">http://www.w3.org/1999/xhtml</span><span class="g">"</span> <span class="n">xmlns:fb</span><span class="g">="</span><span class="v">http://www.facebook.com/</span></span>
 <span class="m" style="left:3px;top:45px"><span class="v">2008/fbml</span><span class="g">"</span> <span class="n">class</span><span class="g">&gt;</span></span>
 <div class="tri" style="left:17px;top:63px"></div>
 <span class="m" style="left:25px;top:60px"><span class="g">&lt;</span><span class="p">head</span> <span class="n">id</span><span class="g">="</span><span class="v">Head1</span><span class="g">"&gt;</span>…<span class="g">&lt;/</span><span class="p">head</span><span class="g">&gt;</span></span>
 <span class="t" style="left:2px;top:75px;color:#555;font-weight:bold;letter-spacing:0;font-size:11px">...</span>
 <div class="a" style="left:17px;top:80px;width:0;height:0;border-top:5px solid #5a5a5a;border-left:4px solid transparent;border-right:4px solid transparent"></div>
 <span class="m" style="left:25px;top:75px"><span class="g">&lt;</span><span class="p">body</span> <span class="n">style</span><span class="g">="</span><span class="v">overflow: hidden;</span><span class="g">"&gt;</span> <span style="color:#777">==</span> <i style="color:#777">$0</i></span>
 <div class="tri" style="left:29px;top:93px"></div>
 <span class="m" style="left:37px;top:90px"><span class="g">&lt;</span><span class="p">form</span> <span class="n">method</span><span class="g">="</span><span class="v">post</span><span class="g">"</span> <span class="n">action</span> <span class="n">id</span><span class="g">="</span><span class="v">form1</span><span class="g">"&gt;</span>…<span class="g">&lt;/</span><span class="p">form</span><span class="g">&gt;</span></span>
 <div class="tri" style="left:29px;top:108px"></div>
 <span class="m" style="left:37px;top:105px"><span class="g">&lt;</span><span class="p">div</span><span class="g">&gt;</span>…<span class="g">&lt;/</span><span class="p">div</span><span class="g">&gt;</span></span>
 <div class="tri" style="left:29px;top:123px"></div>
 <span class="m" style="left:37px;top:120px"><span class="g">&lt;</span><span class="p">div</span><span class="g">&gt;</span>…<span class="g">&lt;/</span><span class="p">div</span><span class="g">&gt;</span></span>
 <div class="tri" style="left:29px;top:138px"></div>
 <span class="m" style="left:37px;top:135px"><span class="g">&lt;</span><span class="p">script</span><span class="g">&gt;</span>…<span class="g">&lt;/</span><span class="p">script</span><span class="g">&gt;</span></span>
 <div class="tri" style="left:29px;top:153px"></div>
 <span class="m" style="left:37px;top:150px"><span class="g">&lt;</span><span class="p">script</span> <span class="n">type</span><span class="g">="</span><span class="v">text/javascript</span><span class="g">"&gt;</span>…<span class="g">&lt;/</span><span class="p">script</span><span class="g">&gt;</span></span>
 <div class="tri" style="left:29px;top:168px"></div>
 <span class="m" style="left:37px;top:165px"><span class="g">&lt;</span><span class="p">script</span> <span class="n">type</span><span class="g">="</span><span class="v">text/javascript</span><span class="g">"&gt;</span>…<span class="g">&lt;/</span><span class="p">script</span><span class="g">&gt;</span></span>
 <div class="tri" style="left:29px;top:183px"></div>
 <span class="m" style="left:37px;top:180px"><span class="g">&lt;</span><span class="p">div</span> <span class="n">style</span><span class="g">="</span><span class="v">position: absolute; bottom: 0px; left: 0px; width: 1px; height:</span></span>
 <span class="m" style="left:27px;top:194px"><span class="v">1px; overflow: hidden; visibility: hidden;</span><span class="g">"&gt;</span>…<span class="g">&lt;/</span><span class="p">div</span><span class="g">&gt;</span></span>
 <span class="m" style="left:37px;top:208px"><span class="g">&lt;</span><span class="p">script</span> <span class="n">id</span><span class="g">="</span><span class="v">facebook</span><span class="g">"</span> <span class="n">type</span><span class="g">="</span><span class="v">application/javascript</span><span class="g">"</span> <span class="n">src</span><span class="g">="</span><span class="v">//</span></span>
</div>
<div class="ln" style="left:886px;top:352px;width:554px;height:1px"></div>
<div class="a" style="left:923px;top:353px;width:41px;height:22px;background:#f3f3f3"></div>
<span class="t" style="left:893px;top:356px;color:#881280">html</span>
<span class="t" style="left:930px;top:356px;color:#333">body</span>
<div class="ln" style="left:886px;top:375px;width:554px;height:1px"></div>
<div class="a" style="left:886px;top:376px;width:554px;height:26px;background:#f3f3f3"></div>
<div class="ln" style="left:886px;top:402px;width:554px;height:1px"></div>
<div class="a" style="left:887px;top:400px;width:52px;height:2px;background:#1a73e8"></div>
<span class="t" style="left:895px;top:381px;color:#333">Styles</span>
<span class="t" style="left:947px;top:381px;color:#5a5a5a">Event Listeners</span>
<span class="t" style="left:1049px;top:381px;color:#5a5a5a">DOM Breakpoints</span>
<span class="t" style="left:1164px;top:381px;color:#5a5a5a">Properties</span>
<span class="t" style="left:1239px;top:381px;color:#5a5a5a">Accessibility</span>

<!-- Styles pane -->
<div class="a" style="left:886px;top:403px;width:339px;height:27px;background:#f3f3f3"></div>
<div class="a" style="left:889px;top:406px;width:228px;height:20px;background:#fff"></div>
<span class="t" style="left:893px;top:408px;color:#8a8a8a">Filter</span>
<span class="m" style="left:1128px;top:408px;font-weight:bold;color:#444">:hov</span>
<span class="m" style="left:1165px;top:408px;font-weight:bold;color:#444">.cls</span>
<svg class="a" style="left:1204px;top:411px" width="11" height="11"><path d="M5.500 0v11M0 5.500h11" stroke="#666" stroke-width="1.200"/></svg>
<div class="a" style="left:1215px;top:422px;width:0;height:0;border-bottom:5px solid #666;border-left:5px solid transparent"></div>
<div class="ln" style="left:1225px;top:403px;width:1px;height:297px"></div>

<span class="m y" style="left:890px;top:431px">element.style {</span>
<span class="m" style="left:908px;top:447px"><span class="r">overflow</span>: <span class="it" style="margin-right:4px"></span>hidden;</span>
<span class="m y" style="left:890px;top:460px">}</span>
<div class="ln" style="left:886px;top:479px;width:339px;height:1px"></div>
<span class="m" style="left:890px;top:482px">body, <span class="y">.genk-</span></span>
<span class="m y" style="left:890px;top:495px">wrapper.detail .genk-</span>
<span class="m y" style="left:890px;top:508px">body-wrapper {</span>
<span class="m l" style="left:1071px;top:482px">cate-201911…1.min.css:1</span>
<span class="m" style="left:908px;top:522px"><span class="r">background</span>: <span class="it"></span><span class="sw" style="background:#f0f1f5"></span>#f0f1f5;</span>
<span class="m y" style="left:890px;top:536px">}</span>
<div class="ln" style="left:886px;top:554px;width:339px;height:1px"></div>
<span class="m" style="left:890px;top:556px">body <span class="y">{</span></span>
<span class="m l" style="left:1071px;top:556px">cate-201911…1.min.css:1</span>
<span class="m s" style="left:908px;top:572px"><span class="r">background</span>: <span class="it"></span><span class="sw" style="background:#fff"></span>#fff;</span>
<span class="m" style="left:908px;top:586px"><span class="r">font-family</span>: Arial;</span>
<span class="m" style="left:908px;top:600px"><span class="r">font-size</span>: 12px;</span>
<span class="m y" style="left:890px;top:614px">}</span>
<div class="ln" style="left:886px;top:632px;width:339px;height:1px"></div>
<span class="m" style="left:890px;top:634px">body <span class="y">{</span></span>
<span class="m l" style="left:1071px;top:634px">cate-201911…1.min.css:1</span>
<span class="m" style="left:908px;top:650px"><span class="r">line-height</span>: 1;</span>
<span class="m s" style="left:908px;top:664px"><span class="r">font-family</span>: Arial,Helvetica,sans-serif;</span>
<span class="m" style="left:908px;top:678px"><span class="r">-webkit-font-smoothing</span>: antialiased;</span>
<div class="a" style="left:886px;top:691px;width:339px;height:9px;overflow:hidden"><span class="m y" style="left:4px;top:0">}</span></div>

<!-- Box model -->
<div class="a" style="left:1253px;top:431px;width:160px;height:134px;box-sizing:border-box;background:#f9cc9d;border:1px dashed #222"></div>
<div class="a" style="left:1266px;top:450px;width:134px;height:96px;box-sizing:border-box;background:#fddd9b;border:1px solid #111"></div>
<div class="a" style="left:1280px;top:469px;width:106px;height:58px;box-sizing:border-box;background:#c3d08b;border:1px dashed #666"></div>
<div class="a" style="left:1293px;top:488px;width:80px;height:20px;box-sizing:border-box;background:#8cb6c0;border:1px solid #777"></div>
<span class="t" style="left:1265px;top:435px;font-size:10px;color:#333">margin</span>
<span class="t" style="left:1278px;top:454px;font-size:10px;color:#333">border</span>
<span class="t" style="left:1291px;top:473px;font-size:10px;color:#333">padding</span>
<span class="t" style="left:1307px;top:492px;font-size:10px;color:#333">980 × 8991</span>
<span class="t" style="left:1331px;top:435px;font-size:10px">-</span>
<span class="t" style="left:1331px;top:454px;font-size:10px">-</span>
<span class="t" style="left:1332px;top:473px;font-size:10px">-</span>
<span class="t" style="left:1331px;top:511px;font-size:10px">-</span>
<span class="t" style="left:1331px;top:530px;font-size:10px">-</span>
<span class="t" style="left:1331px;top:549px;font-size:10px">-</span>
<span class="t" style="left:1260px;top:492px;font-size:10px">-</span>
<span class="t" style="left:1273px;top:492px;font-size:10px">-</span>
<span class="t" style="left:1287px;top:492px;font-size:10px">-</span>
<span class="t" style="left:1377px;top:492px;font-size:10px">-</span>
<span class="t" style="left:1391px;top:492px;font-size:10px">-</span>
<span class="t" style="left:1404px;top:492px;font-size:10px">-</span>

<div class="ln" style="left:1226px;top:593px;width:214px;height:1px"></div>
<span class="t" style="left:1233px;top:599px;color:#8a8a8a">Filter</span>
<div class="a" style="left:1369px;top:601px;width:10px;height:10px;border:1px solid #9b9b9b;border-radius:3px;background:#fff"></div>
<span class="t" style="left:1387px;top:599px;color:#444">Show all</span>
<div class="ln" style="left:1226px;top:620px;width:214px;height:1px;background:#e6e6e6"></div>
<div class="a" style="left:1226px;top:622px;width:214px;height:30px;background:#f5f5f5"></div>
<div class="a" style="left:1226px;top:682px;width:214px;height:18px;background:#f5f5f5"></div>
<div class="tri" style="left:1232px;top:627px"></div>
<span class="m r" style="left:1241px;top:624px">background-attachment</span>
<span class="m" style="left:1241px;top:637px">scroll</span>
<div class="tri" style="left:1232px;top:657px"></div>
<span class="m r" style="left:1241px;top:654px">background-clip</span>
<span class="m" style="left:1241px;top:667px">border-box</span>
<div class="tri" style="left:1232px;top:687px"></div>
<span class="m r" style="left:1241px;top:684px">background-color</span>

<!-- Drawer -->
<div class="a" style="left:885px;top:700px;width:555px;height:200px;background:#fff"></div>
<div class="a" style="left:886px;top:701px;width:554px;height:53px;background:#f3f3f3"></div>
<div class="ln" style="left:885px;top:700px;width:555px;height:1px"></div>
<div class="ln" style="left:886px;top:727px;width:554px;height:1px"></div>
<div class="ln" style="left:886px;top:754px;width:554px;height:1px"></div>
<div class="ln" style="left:885px;top:700px;width:1px;height:200px"></div>
<svg class="a" style="left:900px;top:707px" width="4" height="14"><use href="#keb"/></svg>
<span class="t" style="left:923px;top:706px;color:#5a5a5a">Console</span>
<span class="t" style="left:987px;top:706px;color:#333">What's New</span>
<svg class="a" style="left:1058px;top:710px" width="8" height="8" viewBox="0 0 8 8"><path d="M.5.500l7 7m0-7l-7 7" stroke="#666" stroke-width="1.200"/></svg>
<div class="a" style="left:978px;top:726px;width:94px;height:2px;background:#1a73e8"></div>
<span class="t" style="left:1081px;top:706px;color:#5a5a5a">Sensors</span>
<span class="t" style="left:1154px;top:706px;color:#5a5a5a">Animations</span>
<span class="t" style="left:1243px;top:706px;color:#5a5a5a">Coverage</span>
<svg class="a" style="left:1419px;top:709px" width="10" height="10" viewBox="0 0 10 10"><path d="M.5.500l9 9m0-9l-9 9" stroke="#5f6368" stroke-width="1.400"/></svg>
<span class="t" style="left:901px;top:733px;color:#333">Highlights from the Chrome 79 update</span>

<span class="hd" style="left:904px;top:773px">Debug why a cookie was blocked</span>
<span class="gt" style="left:904px;top:793px">Click a resource in the Network panel and go to the updated</span>
<span class="gt" style="left:904px;top:806px">Cookies tab.</span>
<span class="hd" style="left:904px;top:831px">View cookie values</span>
<span class="gt" style="left:904px;top:851px">Click a row in the Cookies pane in the Application panel to see</span>
<span class="gt" style="left:904px;top:864px">the cookie's value.</span>
<div class="a" style="left:886px;top:886px;width:439px;height:14px;overflow:hidden"><span class="hd" style="left:18px;top:2px">Simulate prefers-color-scheme and prefers-reduced-</span></div>

<svg class="a" style="left:1325px;top:775px" width="115" height="125" viewBox="1325 775 115 125">
<rect x="1325" y="775" width="115" height="125" fill="#3370ec"/>
<g stroke="#7aa2f3" stroke-width=".8" fill="none" opacity=".8">
<circle cx="1389" cy="837" r="56"/>
<path d="M1325 796h115M1325 875h115M1345 775v125M1431 775v125M1330 775l115 120M1448 775l-125 125M1389 775v125M1325 837h115"/>
</g>
<g stroke="#fff" fill="none">
<circle cx="1389" cy="837" r="32" stroke-width="2.500"/>
<circle cx="1389" cy="837" r="44" stroke-width="3"/>
<path d="M1389 793h60" stroke-width="3"/>
<path d="M1325 810l33 48M1425 866l-25 42" stroke-width="3"/>
</g>
<rect x="1426" y="857" width="30" height="33" rx="5" fill="#f50009"/>
</svg>
</body></html>
